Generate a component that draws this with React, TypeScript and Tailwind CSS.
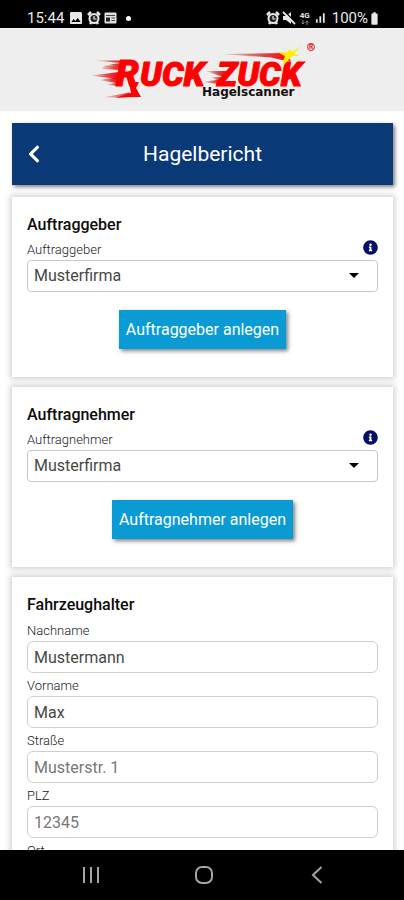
import { useId } from "react";
import type { ReactNode } from "react";
import { FaChevronLeft, FaInfoCircle } from "react-icons/fa";
import { MdBatteryFull, MdImage, MdSignalCellularAlt } from "react-icons/md";

function AlarmIcon() {
  return (
    <svg viewBox="0 0 14 14" className="size-[14px]" aria-hidden="true">
      <path d="M1 4 4 1M13 4 10 1M3 13l1.500-2M11 13l-1.500-2" stroke="currentColor" strokeWidth="2.500" />
      <circle cx="7" cy="7.500" r="5.500" fill="currentColor" />
      <circle cx="7" cy="7.500" r="3.500" fill="#222" />
      <path d="M7 5v3h2.500" fill="none" stroke="currentColor" strokeWidth="1.200" />
    </svg>
  );
}

function StatusBar() {
  return (
    <div className="flex h-7 shrink-0 items-end justify-between bg-black pr-[22px] pl-[27px] text-[15px] text-[#e8e8e8]">
      <div className="flex h-5 items-center">
        <span className="mr-1 leading-5">15:44</span>
        <MdImage className="mr-[3px] size-4" />
        <AlarmIcon />
        <svg viewBox="0 0 13 12" className="ml-[3px] h-3 w-[13px]" aria-hidden="true">
          <rect x="0.5" y="0.5" width="12" height="11" rx="1" fill="#e0e0e0" />
          <path d="M2 3.500h9M7.500 6h3.500M7.500 8.500h3.500" stroke="#444" strokeWidth="1" />
          <rect x="2" y="5.500" width="4" height="4" fill="#222" />
        </svg>
        <span className="ml-[9px] size-[5px] rounded-full bg-white" />
      </div>
      <div className="flex h-5 items-center">
        <AlarmIcon />
        <svg viewBox="0 0 14 14" className="ml-0.5 size-[14px]" aria-hidden="true">
          <path d="M1 5h3l5-4v12L4 9H1z" fill="currentColor" />
          <path d="M2 0 14 12" stroke="#000" strokeWidth="1.500" />
          <path d="M1 1 13 13" stroke="currentColor" strokeWidth="1.800" />
        </svg>
        <span className="ml-1 flex flex-col items-center">
          <span className="text-[8px] leading-[9px] font-bold">4G</span>
          <svg viewBox="0 0 8 5" className="h-[5px] w-2" fill="none" stroke="#888" aria-hidden="true">
            <path d="M2 0v4M0.500 2.500 2 4l1.500-1.500M6 5V1M4.500 2.500 6 1l1.500 1.500" />
          </svg>
        </span>
        <MdSignalCellularAlt className="ml-[3px] size-[14px]" />
        <span className="ml-[5px] leading-5">100%</span>
        <MdBatteryFull className="-ml-px size-[15px]" />
      </div>
    </div>
  );
}

function Logo() {
  return (
    <svg viewBox="0 0 230 60" className="h-[60px] w-[230px]" role="img" aria-label="Ruck Zuck Hagelscanner">
      <defs>
        <linearGradient id="streak" x1="0" x2="1">
          <stop offset="0" stopColor="#c00" stopOpacity="0.1" />
          <stop offset="0.6" stopColor="#d80000" stopOpacity="0.7" />
          <stop offset="1" stopColor="#f00" />
        </linearGradient>
      </defs>
      <g fill="url(#streak)">
        <path d="M7 20.500 40 20.500 36 26 22 24.500 34 23z" />
        <path d="M18 25.500 36 25 34 30 14 29z" />
        <path d="M4 35.500 32 32 31 39 14 37z" />
        <path d="M12 40 32 37 30 43z" />
        <path d="M20 45 34 41 33 46z" />
        <path d="M16 57.500 42 52.500 53 57z" />
        <path d="M119 31 139 31 136 37z" />
        <path d="M124 37 138 37 133 42z" />
        <path d="M116 42 136 39 132 44z" />
      </g>
      <path d="M134 14 198 13 204 21 195 20 184 17.500z" fill="url(#streak)" />
      <g fontFamily="Roboto, sans-serif" fontWeight="900" fontStyle="italic" fill="#f00" stroke="#f00">
        <text x="29" y="46" fontSize="36">R</text>
        <text x="53" y="46" fontSize="34">UCK</text>
        <text x="130" y="46" fontSize="34">ZUCK</text>
      </g>
      <path d="M42 42 52 42 49 48 54 57H42L28 58 44 53z" fill="#f00" />
      <path d="M196 21 198 16 190 12 200 12.500 203 9 205 12 214 6 207 13.500 213 16 205 16 197 25z" fill="#fff000" />
      <text x="115" y="56" fontFamily="'DejaVu Sans', sans-serif" fontWeight="700" fontSize="12" fill="#111">Hagelscanner</text>
      <text x="219" y="11" fontFamily="'DejaVu Sans', sans-serif" fontSize="10" fill="#e04040" stroke="#e04040" strokeWidth="0.4">®</text>
    </svg>
  );
}

function Card({ title, children }: { title: string; children: ReactNode }) {
  return (
    <section className="bg-white px-[15px] pt-[17px] pb-7 shadow-[0_0_6px_2px_rgba(0,0,0,0.18)]">
      <h2 className="text-[16px] leading-[22px] font-medium text-[#0c0c0c]">{title}</h2>
      {children}
    </section>
  );
}

function PartyCard({ title }: { title: string }) {
  const id = useId();
  return (
    <Card title={title}>
      <div className="mt-[3px] flex h-[21px] items-center justify-between">
        <label htmlFor={id} className="text-[13px] leading-5 font-light text-[#222]">{title}</label>
        <button type="button" aria-label={`Info ${title}`} className="pb-1 text-[#020f6b]">
          <FaInfoCircle className="size-[15px]" />
        </button>
      </div>
      <div className="relative">
        <select id={id} className="h-8 w-full appearance-none rounded border border-[#c8c8c8] bg-white px-[6px] text-[16px] text-[#484848]">
          <option>Musterfirma</option>
        </select>
        <svg viewBox="0 0 10 5" className="pointer-events-none absolute top-[13px] right-[19px] h-[5px] w-[10px]" aria-hidden="true">
          <path d="M0 0h10L5 5z" fill="#000" />
        </svg>
      </div>
      <div className="mt-[18px] flex justify-center">
        <button type="button" className="h-[39px] bg-[#0a9bd4] px-[7px] text-[16px] text-white shadow-[2px_2px_4px_rgba(0,0,0,0.5)]">
          {title} anlegen
        </button>
      </div>
    </Card>
  );
}

function Field({ label, value, placeholder }: { label: string; value?: string; placeholder?: string }) {
  const id = useId();
  return (
    <div>
      <label htmlFor={id} className="block text-[13px] leading-[21px] font-light text-[#222]">{label}</label>
      <input
        id={id}
        defaultValue={value}
        placeholder={placeholder}
        className="block h-8 w-full rounded-md border border-[#cfcfcf] bg-white px-[6px] text-[16px] text-[#484848] placeholder:text-[#777]"
      />
    </div>
  );
}

function NavBar() {
  return (
    <nav className="grid h-[50px] shrink-0 grid-cols-3 bg-black pr-[30px] pl-[34px] text-[#a5a5a5]">
      <button type="button" aria-label="Letzte Apps" className="flex items-center justify-center">
        <svg viewBox="0 0 18 16" className="h-4 w-[18px]" fill="none" stroke="currentColor" strokeWidth="2">
          <path d="M2 0v16M9 0v16M16 0v16" />
        </svg>
      </button>
      <button type="button" aria-label="Startseite" className="flex items-center justify-center">
        <svg viewBox="0 0 18 18" className="size-[18px]" fill="none" stroke="currentColor" strokeWidth="2">
          <rect x="1" y="1" width="16" height="16" rx="6" />
        </svg>
      </button>
      <button type="button" aria-label="Zurück" className="flex items-center justify-center">
        <svg viewBox="0 0 12 18" className="h-[18px] w-3" fill="none" stroke="currentColor" strokeWidth="2">
          <path d="M10.500 1 2 9l8.500 8" />
        </svg>
      </button>
    </nav>
  );
}

export default function App() {
  return (
    <div className="flex h-screen flex-col overflow-hidden bg-white font-[Roboto,'Liberation_Sans',sans-serif]">
      <StatusBar />
      <header className="flex h-[83px] shrink-0 items-center justify-center bg-[#eeeeee]">
        <Logo />
      </header>
      <main className="flex min-h-0 flex-1 flex-col overflow-hidden pt-3 pr-[11px] pl-3">
        <div className="grid h-[62px] shrink-0 grid-cols-[1fr_auto_1fr] items-center bg-[#0a3978] px-3 text-white shadow-[2px_2px_4px_rgba(0,0,0,0.5)]">
          <button type="button" aria-label="Zurück" className="justify-self-start">
            <FaChevronLeft className="size-5" />
          </button>
          <h1 className="pt-0.5 text-[21px]">Hagelbericht</h1>
        </div>
        <div className="mt-3 flex flex-col gap-[10px]">
          <PartyCard title="Auftraggeber" />
          <PartyCard title="Auftragnehmer" />
          <Card title="Fahrzeughalter">
            <div className="mt-1 flex flex-col gap-0.5">
              <Field label="Nachname" value="Mustermann" />
              <Field label="Vorname" value="Max" />
              <Field label="Straße" placeholder="Musterstr. 1" />
              <Field label="PLZ" placeholder="12345" />
              <Field label="Ort" />
            </div>
          </Card>
        </div>
      </main>
      <NavBar />
    </div>
  );
}
